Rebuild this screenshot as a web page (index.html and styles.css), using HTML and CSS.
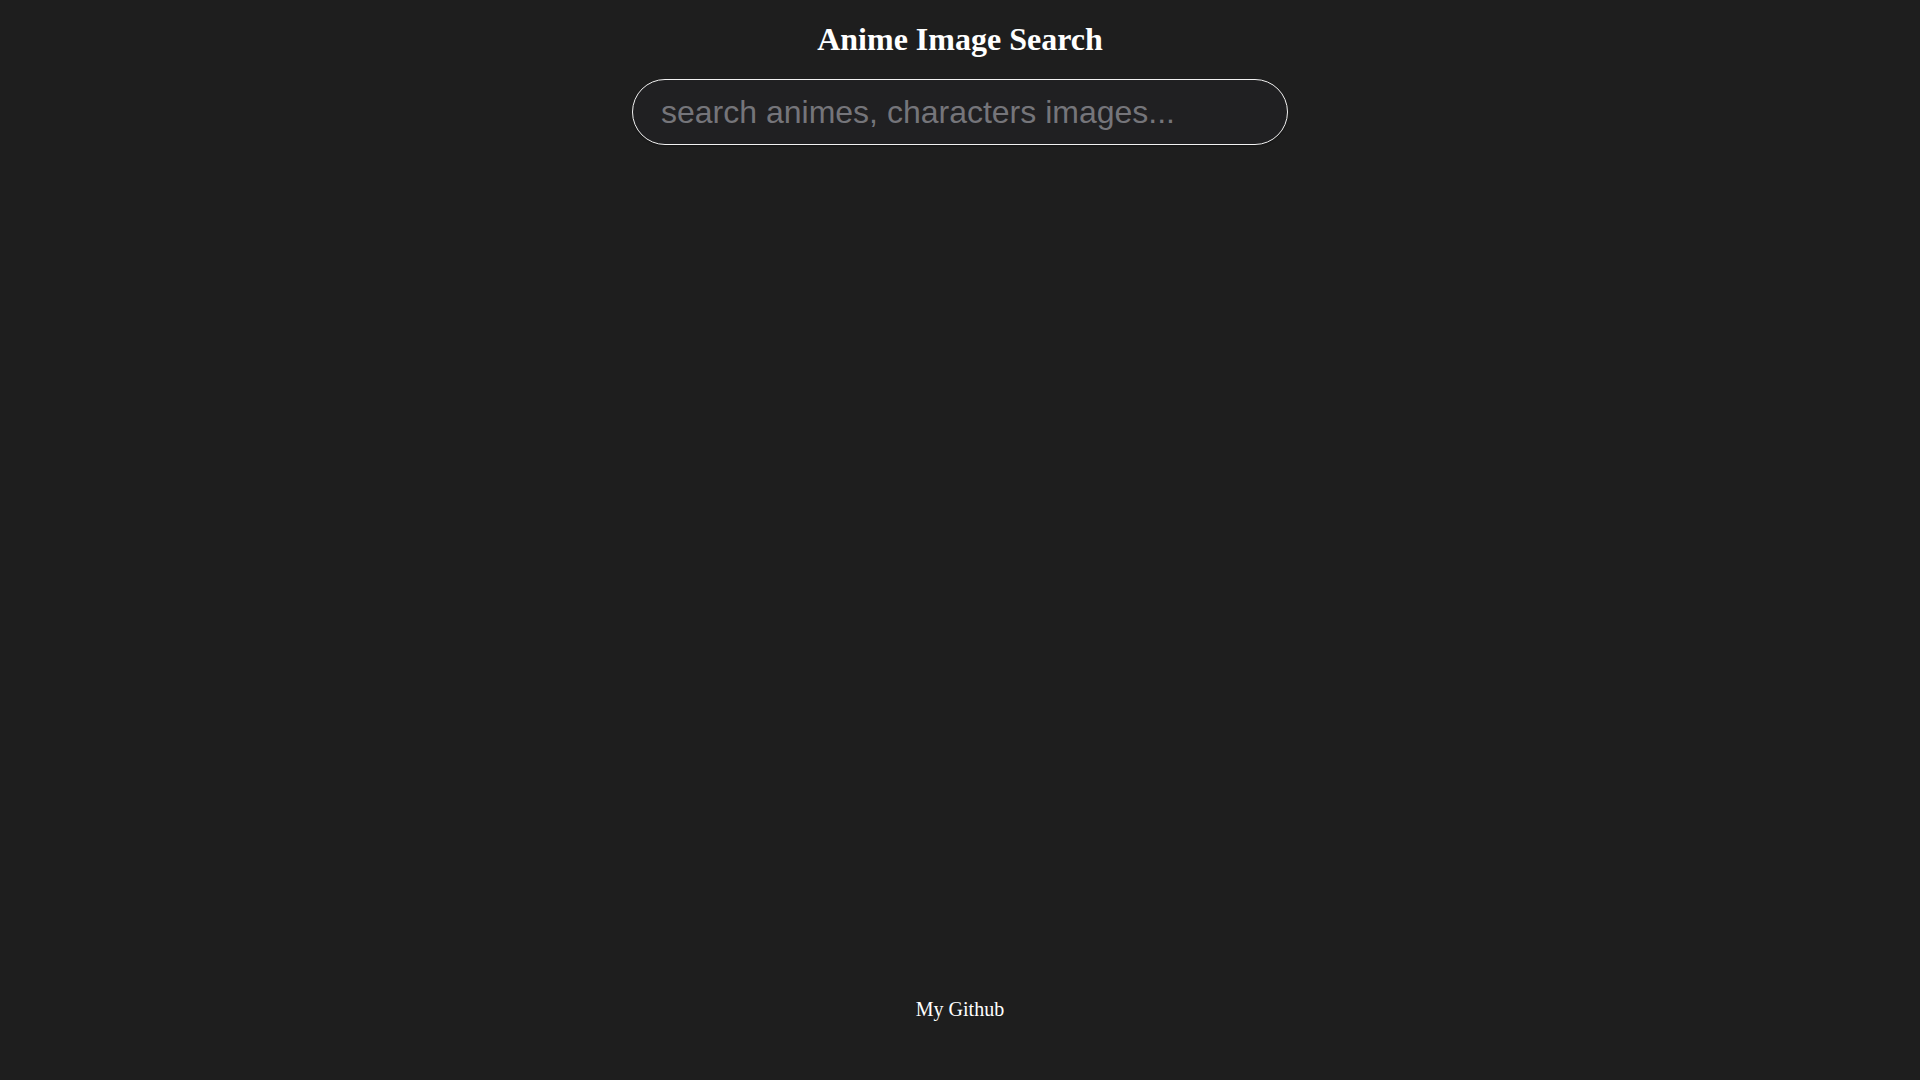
FILE: index.html
```html
<!DOCTYPE html>
<html lang="en">
<head>
<meta charset="utf-8">
<title>Anime Image Search</title>
<link rel="stylesheet" href="styles.css">
</head>
<body>
<div class="page">
  <h1 class="title">Anime Image Search</h1>
  <input class="search" type="text" placeholder="search animes, characters images..." autofocus>
  <main class="results"></main>
  <footer class="footer"><a class="footer-link" href="#">My Github</a></footer>
</div>
</body>
</html>
```
FILE: styles.css
```css
html, body {
  margin: 0;
  padding: 0;
  background: #1e1e1e;
}
.page {
  display: flex;
  flex-direction: column;
  align-items: center;
  min-height: 100vh;
  font-family: "Liberation Serif", "Times New Roman", serif;
  color: #ffffff;
}
.title {
  margin: 21px 0 21px;
  font-size: 32px;
  font-weight: bold;
  line-height: 37px;
  color: #ffffff;
}
.search {
  box-sizing: border-box;
  width: 656px;
  height: 66px;
  padding: 0 27px 0 28px;
  border: 1px solid #f2f2f2;
  border-radius: 33px;
  background: #202022;
  color: #e0e0e0;
  font-family: "Liberation Sans", Arial, sans-serif;
  font-size: 32px;
  outline: none;
  caret-color: #ffffff;
  box-shadow: 0 1px 2px rgba(0,0,0,0.35);
}
.search::placeholder {
  color: #75757a;
}
.results {
  flex: 1;
}
.footer {
  padding-bottom: 59px;
  font-size: 20px;
  line-height: 23px;
}
.footer-link {
  color: #ffffff;
  text-decoration: none;
}
```
